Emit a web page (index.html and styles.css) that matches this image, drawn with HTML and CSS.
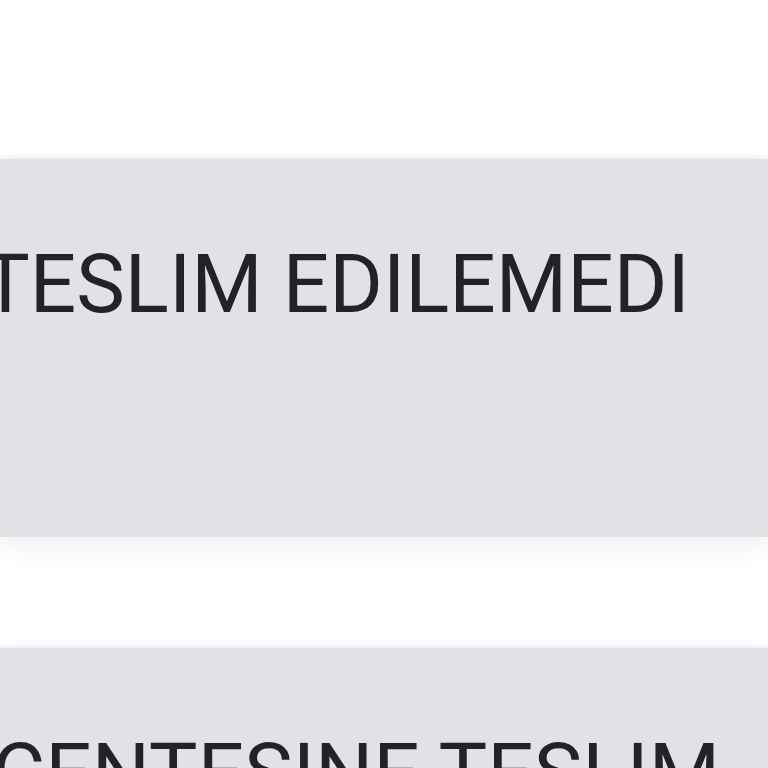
FILE: index.html
```html
<!DOCTYPE html>
<html lang="tr">
<head>
<meta charset="utf-8">
<link rel="stylesheet" href="styles.css">
</head>
<body>
<ul class="status-list">
  <li class="status-item">
    <span class="status-label label-first">TESLIM EDILEMEDI</span>
  </li>
  <li class="status-item">
    <span class="status-label label-second">ACENTESINE TESLIM</span>
  </li>
</ul>
</body>
</html>
```
FILE: styles.css
```css
html, body {
  margin: 0;
  padding: 0;
  background: #ffffff;
  overflow: hidden;
}
body {
  width: 768px;
  height: 768px;
  font-family: Roboto, "Noto Sans", sans-serif;
  color: #222326;
}
.status-list {
  list-style: none;
  margin: 0;
  padding: 159px 0 0 0;
  display: flex;
  flex-direction: column;
  gap: 111px;
}
.status-item {
  height: 378px;
  background: #e1e2e6;
  box-shadow: 0 10px 24px rgba(40, 50, 70, 0.07), 0 -2px 4px rgba(200, 215, 235, 0.35);
  padding-top: 77px;
  box-sizing: border-box;
  white-space: nowrap;
}
.status-label {
  display: block;
  font-size: 81.8px;
  line-height: 96px;
  font-weight: 400;
}
.label-first {
  margin-left: -19px;
}
.label-second {
  margin-left: -61px;
}
```
